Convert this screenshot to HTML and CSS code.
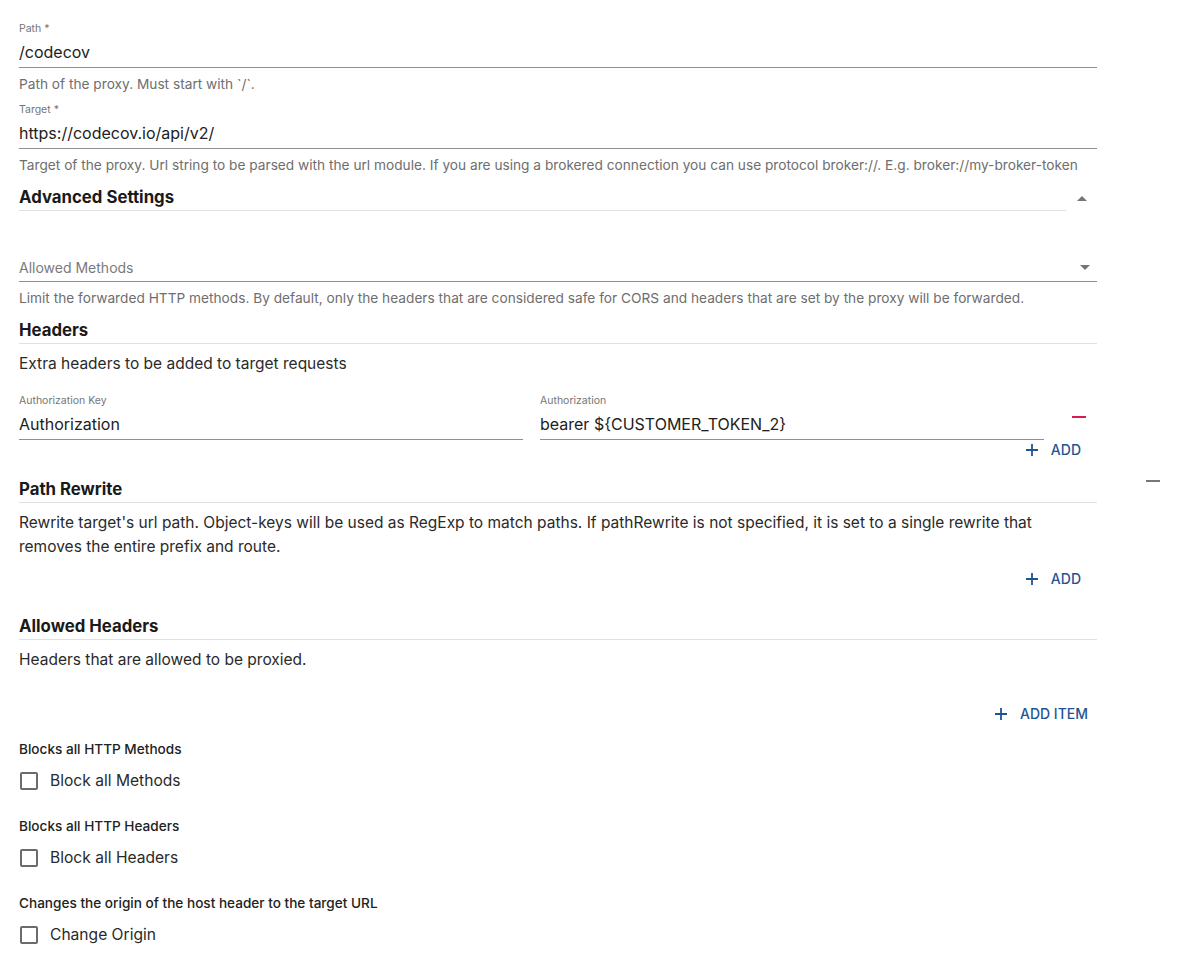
FILE: index.html
```html
<!DOCTYPE html>
<html lang="en">
<head>
<meta charset="utf-8">
<title>Proxy settings</title>
<link rel="stylesheet" href="styles.css">
</head>
<body>
<form class="form">
  <div class="field">
    <label class="flabel">Path *</label>
    <div class="input">/codecov</div>
    <p class="helper">Path of the proxy. Must start with `/`.</p>
  </div>
  <div class="field field-gap">
    <label class="flabel">Target *</label>
    <div class="input">https://codecov.io/api/v2/</div>
    <p class="helper">Target of the proxy. Url string to be parsed with the url module. If you are using a brokered connection you can use protocol broker://. E.g. broker://my-broker-token</p>
  </div>

  <div class="section-head adv">
    <h3 class="title">Advanced Settings</h3>
    <span class="caret-btn"><svg width="10" height="5" viewBox="0 0 10 5"><path d="M0 5 L5 0 L10 5 Z" fill="#757575"/></svg></span>
  </div>

  <div class="select">
    <span class="placeholder">Allowed Methods</span>
    <svg class="caret-down" width="10" height="5" viewBox="0 0 10 5"><path d="M0 0 L10 0 L5 5 Z" fill="#757575"/></svg>
  </div>
  <p class="helper">Limit the forwarded HTTP methods. By default, only the headers that are considered safe for CORS and headers that are set by the proxy will be forwarded.</p>

  <h3 class="title section headers-title">Headers</h3>
  <p class="desc">Extra headers to be added to target requests</p>
  <div class="kv-row">
    <div class="kv-field">
      <label class="flabel">Authorization Key</label>
      <div class="input">Authorization</div>
    </div>
    <div class="kv-field">
      <label class="flabel">Authorization</label>
      <div class="input">bearer ${CUSTOMER_TOKEN_2}</div>
    </div>
    <div class="remove"><span class="minus"></span></div>
  </div>
  <div class="add-row">
    <span class="add-btn"><svg width="12" height="12" viewBox="0 0 12 12"><path d="M6 0V12M0 6H12" stroke="#1f5493" stroke-width="1.8"/></svg>ADD</span>
  </div>
  <span class="stray-dash"></span>

  <h3 class="title section rewrite-title">Path Rewrite</h3>
  <p class="desc">Rewrite target's url path. Object-keys will be used as RegExp to match paths. If pathRewrite is not specified, it is set to a single rewrite that removes the entire prefix and route.</p>
  <div class="add-row add-row-2">
    <span class="add-btn"><svg width="12" height="12" viewBox="0 0 12 12"><path d="M6 0V12M0 6H12" stroke="#1f5493" stroke-width="1.8"/></svg>ADD</span>
  </div>

  <h3 class="title section allowed-title">Allowed Headers</h3>
  <p class="desc">Headers that are allowed to be proxied.</p>
  <div class="add-row add-item-row">
    <span class="add-btn"><svg width="12" height="12" viewBox="0 0 12 12"><path d="M6 0V12M0 6H12" stroke="#1f5493" stroke-width="1.8"/></svg>ADD ITEM</span>
  </div>

  <p class="cb-title first">Blocks all HTTP Methods</p>
  <label class="cb-row"><span class="box"></span>Block all Methods</label>
  <p class="cb-title">Blocks all HTTP Headers</p>
  <label class="cb-row"><span class="box"></span>Block all Headers</label>
  <p class="cb-title">Changes the origin of the host header to the target URL</p>
  <label class="cb-row"><span class="box"></span>Change Origin</label>
</form>
</body>
</html>
```
FILE: styles.css
```css
* { box-sizing: border-box; }
html, body { margin: 0; padding: 0; background: #fff; }
body {
  font-family: Inter, "Noto Sans", "Liberation Sans", sans-serif;
  color: #212121;
  position: relative;
  height: 963px;
  overflow: hidden;
}
.form {
  width: 1097px;
  padding: 23px 0 0 19px;
  margin: 0;
}
p, h3 { margin: 0; }
.flabel {
  display: block;
  font-size: 10.5px;
  line-height: 12px;
  color: #757575;
}
.input {
  font-size: 16px;
  line-height: 24px;
  padding: 5px 0 3px;
  border-bottom: 1px solid #8f8f8f;
  color: #212121;
}
.helper {
  margin-top: 6px;
  font-size: 13.7px;
  line-height: 20px;
  color: #6e6e6e;
}
.field-gap { margin-top: 10px; }

.title {
  font-weight: 700;
  font-size: 16.8px;
  line-height: 24px;
  padding: 1px 0 1px;
  border-bottom: 1px solid #e0e0e0;
  color: #1a1a1a;
}
.section-head {
  display: flex;
  align-items: flex-start;
  margin-top: 9px;
}
.section-head .title { flex: 1; }
.caret-btn {
  width: 31px;
  display: flex;
  justify-content: center;
  padding-top: 12px;
}
.select {
  margin-top: 40px;
  display: flex;
  align-items: center;
  justify-content: space-between;
  padding: 5px 7px 1px 0;
  border-bottom: 1px solid #8f8f8f;
  font-size: 14px;
  line-height: 24px;
}
.placeholder { color: #7a7a7a; font-size: 14px; }
.caret-down { margin-top: -2px; }

.headers-title { margin-top: 9px; }
.rewrite-title { margin-top: 16px; }
.allowed-title { margin-top: 24px; }

.desc {
  margin-top: 8px;
  font-size: 15.5px;
  line-height: 24px;
  color: #2a2a2a;
}
.kv-row {
  display: flex;
  margin-top: 19px;
}
.kv-field { width: 504px; }
.kv-field + .kv-field { margin-left: 17px; }
.remove {
  flex: 1;
  display: flex;
  justify-content: flex-end;
  padding-right: 11px;
  padding-top: 21px;
}
.minus {
  display: block;
  width: 14px;
  height: 2px;
  background: #d81b50;
}
.add-row {
  display: flex;
  justify-content: flex-end;
  padding-right: 16px;
}
.add-row-2 { margin-top: 10px; }
.add-item-row { margin-top: 32px; padding-right: 9px; }
.add-btn {
  display: inline-flex;
  align-items: center;
  gap: 13px;
  font-size: 14px;
  font-weight: 500;
  line-height: 20px;
  color: #1f5493;
}
.stray-dash {
  position: absolute;
  left: 1146px;
  top: 480px;
  width: 14px;
  height: 2px;
  background: #777;
}
.cb-title {
  margin-top: 23px;
  font-size: 13.6px;
  line-height: 20px;
  font-weight: 500;
  color: #222;
}
.cb-title.first { margin-top: 15px; }
.cb-row {
  display: flex;
  align-items: center;
  margin-top: 10px;
  font-size: 15.6px;
  line-height: 24px;
  color: #2a2a2a;
}
.box {
  width: 18px;
  height: 18px;
  border: 2px solid #6b6b6b;
  border-radius: 2px;
  margin-left: 1px;
  margin-right: 12px;
}
```
